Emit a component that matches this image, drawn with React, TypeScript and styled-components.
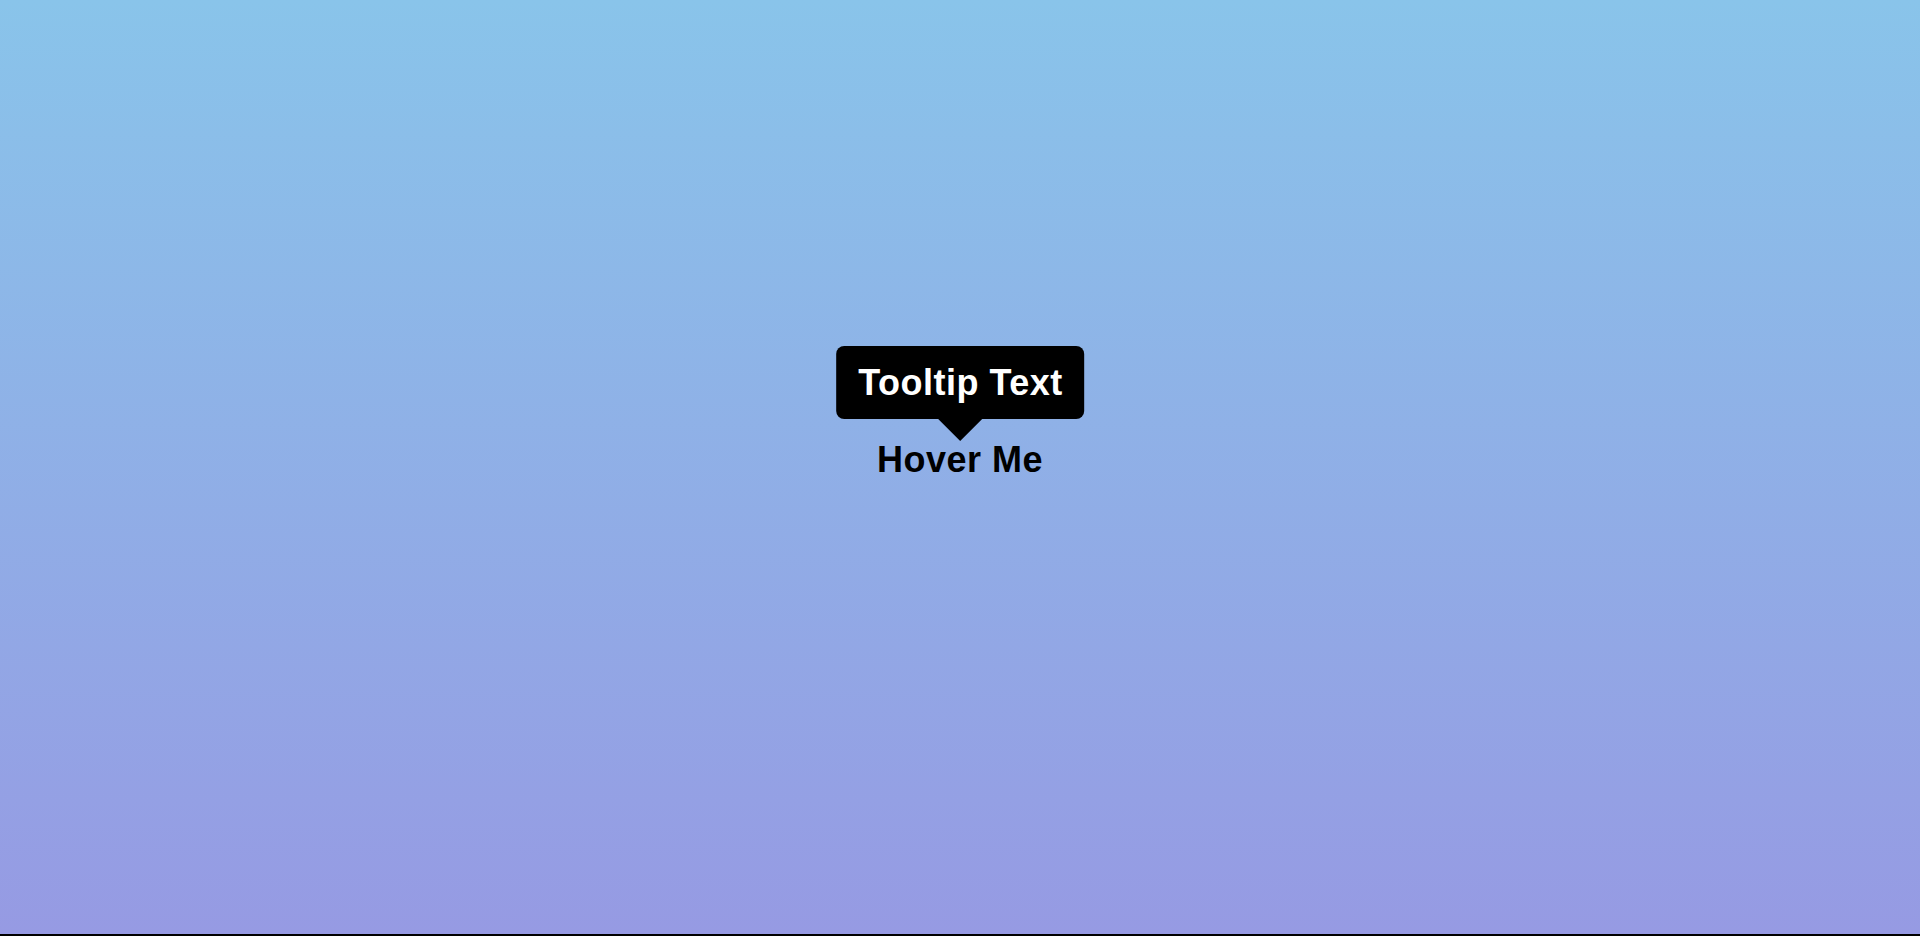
import React from "react";
import styled, { createGlobalStyle } from "styled-components";

const Global = createGlobalStyle`
  html, body { margin: 0; padding: 0; background: #000; }
  body { font-family: "Liberation Sans", Arial, sans-serif; }
`;

const Page = styled.main`
  height: calc(100vh - 2px);
  background: linear-gradient(to bottom, #89c4ea, #969ae3);
  display: flex;
  align-items: center;
  justify-content: center;
`;

const Trigger = styled.div`
  position: relative;
  font-size: 36px;
  font-weight: 700;
  letter-spacing: 0.5px;
  color: #000;
  margin-bottom: 15px;
`;

const Tip = styled.div`
  position: absolute;
  left: 50%;
  bottom: calc(100% + 20px);
  transform: translateX(-50%);
  background: #000;
  color: #fff;
  white-space: nowrap;
  padding: 0 21px 0 22px;
  line-height: 73px;
  height: 73px;
  border-radius: 8px;
  &::after {
    content: "";
    position: absolute;
    top: 100%;
    left: 50%;
    margin-left: -22px;
    border-style: solid;
    border-width: 22px 22px 0 22px;
    border-color: #000 transparent transparent transparent;
  }
`;

export default function App() {
  return (
    <>
      <Global />
      <Page>
        <Trigger>
          Hover Me
          <Tip>Tooltip Text</Tip>
        </Trigger>
      </Page>
    </>
  );
}
